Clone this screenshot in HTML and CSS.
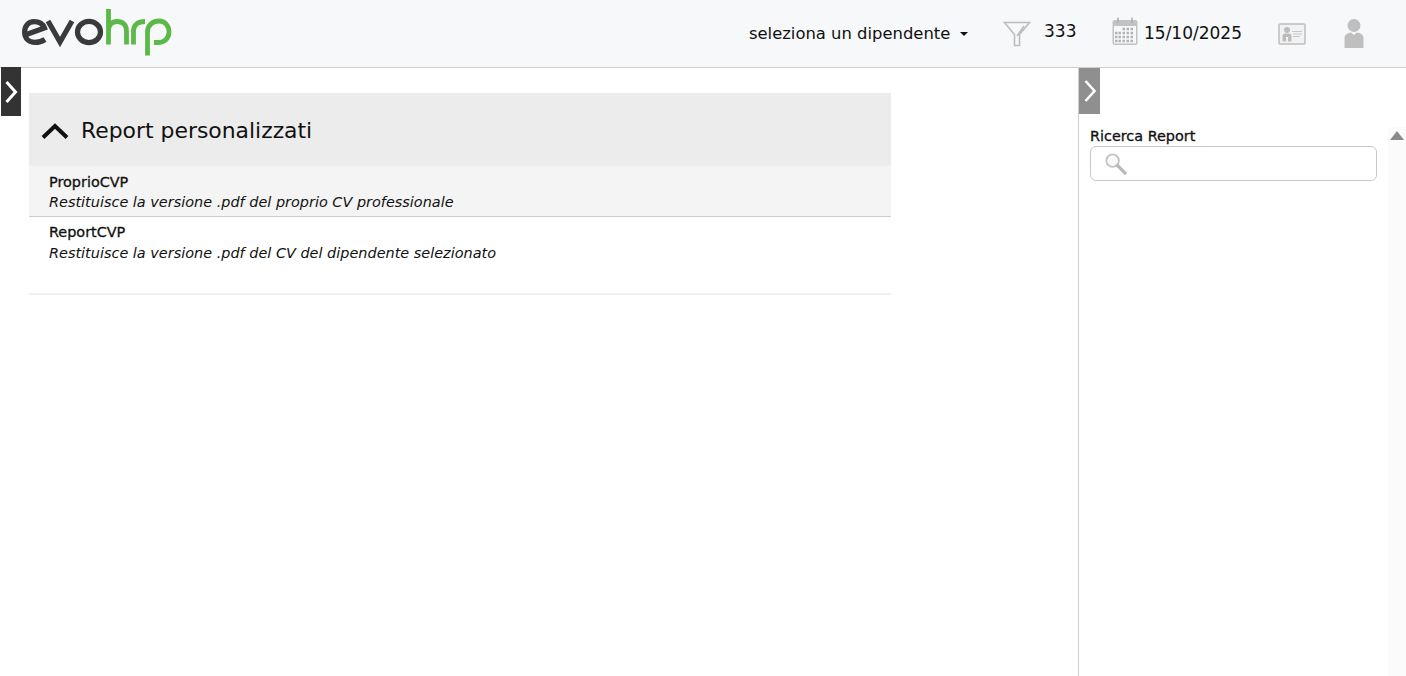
FILE: index.html
```html
<!DOCTYPE html>
<html lang="it">
<head>
<meta charset="utf-8">
<title>evohrp</title>
<link rel="stylesheet" href="styles.css">
</head>
<body>
<header class="topbar">
  <svg class="logo" viewBox="0 0 152 48" width="152" height="48" role="img" aria-label="evohrp">
    <g fill="none" stroke="#3a3a3a" stroke-width="5.200">
      <path d="M5 27 L24.500 20 C23 16 19 13.600 14 13.600 C8 13.600 4.600 18.500 4.600 24 C4.600 30.500 9 34.400 15 34.400 C19 34.400 22 33.500 25 31.500"/>
      <path d="M28 13 L40 34 L52 13"/>
      <ellipse cx="69" cy="24" rx="11.500" ry="10.600"/>
    </g>
    <g fill="none" stroke="#5cb947" stroke-width="4.800">
      <path d="M88.500 1 V36.500 M88.500 23 C88.500 16.500 92 13.500 97 13.500 C103 13.500 106.500 17 106.500 23 V36.500"/>
      <path d="M113.500 36.500 V23 C113.500 16.500 118 13.500 125 13.500"/>
      <path d="M127.500 47.500 V24 C127.500 17 133 13 139 13 C145 13 149 18 149 24 C149 30.500 144 34.500 138 34.500 H134"/>
    </g>
  </svg>
  <div class="tools">
    <div class="employee">seleziona un dipendente<span class="caret"></span></div>
    <svg class="icon-filter" viewBox="0 0 28 26" width="28" height="26" aria-hidden="true">
      <path d="M1.500 1.500 H26.500 L16.500 13.500 V24.500 H11.500 V13.500 Z M14 15 L21 5" fill="none" stroke="#bdbdbd" stroke-width="1.600"/>
    </svg>
    <span class="count">333</span>
    <svg class="icon-cal" viewBox="0 0 26 28" width="26" height="28" aria-hidden="true">
      <rect x="0.500" y="3" width="25" height="25" rx="2.500" fill="#c2c2c2"/>
      <rect x="2" y="9" width="22" height="17.500" fill="#f7f8fa"/>
      <path d="M6 0.500 V6 M20 0.500 V6" stroke="#b0b0b0" stroke-width="1.600"/>
      <path d="M10.500 12 H13 M14.500 12 H17 M18.500 12 H21 M3 16 H5.500 M6.500 16 H9 M10.500 16 H13 M14.500 16 H17 M18.500 16 H21 M3 20 H5.500 M6.500 20 H9 M10.500 20 H13 M14.500 20 H17 M18.500 20 H21 M3 24 H5.500 M6.500 24 H9 M10.500 24 H13 M14.500 24 H17 M18.500 24 H21" stroke="#b4b4b4" stroke-width="2.600"/>
    </svg>
    <span class="date">15/10/2025</span>
    <svg class="icon-card" viewBox="0 0 28 22" width="28" height="22" aria-hidden="true">
      <rect x="1" y="1" width="26" height="20" rx="1" fill="#f2f2f2" stroke="#bdbdbd" stroke-width="1.500"/>
      <circle cx="9" cy="7" r="3" fill="#bdbdbd"/>
      <path d="M4.500 18.500 V13 C4.500 11 6 10.500 9 10.500 C12 10.500 13.500 11 13.500 13 V18.500 H10 V14 H8 V18.500 Z" fill="#bdbdbd"/>
      <path d="M14 8.500 H24 M15 11 H24 M15 13.500 H22" stroke="#c8c8c8" stroke-width="1"/>
    </svg>
    <svg class="icon-user" viewBox="0 0 20 29" width="20" height="29" aria-hidden="true">
      <circle cx="10" cy="6.500" r="6.500" fill="#bfbfbf"/>
      <path d="M0.500 29 V19 C0.500 15.500 4 14 7 13.500 L10 16 L13 13.500 C16 14 19.500 15.500 19.500 19 V29 Z" fill="#bfbfbf"/>
    </svg>
  </div>
</header>
<div class="workspace">
  <div class="main">
    <button class="tab tab-dark" aria-label="Apri menu">
      <svg viewBox="0 0 14 24" width="14" height="24" aria-hidden="true"><path d="M2.500 2 L11.500 12 L2.500 22" fill="none" stroke="#fff" stroke-width="3"/></svg>
    </button>
    <section class="reports">
      <h1 class="group-head">
        <svg viewBox="0 0 28 16" width="28" height="16" aria-hidden="true"><path d="M2 14.500 L14 3 L26 14.500" fill="none" stroke="#111" stroke-width="4"/></svg>
        Report personalizzati
      </h1>
      <article class="report report-active">
        <h2 class="report-name">ProprioCVP</h2>
        <p class="report-desc">Restituisce la versione .pdf del proprio CV professionale</p>
      </article>
      <article class="report report-last">
        <h2 class="report-name">ReportCVP</h2>
        <p class="report-desc">Restituisce la versione .pdf del CV del dipendente selezionato</p>
      </article>
    </section>
  </div>
  <aside class="side">
    <button class="tab tab-grey" aria-label="Chiudi pannello">
      <svg viewBox="0 0 14 24" width="14" height="24" aria-hidden="true"><path d="M2.500 2 L11.500 12 L2.500 22" fill="none" stroke="#fff" stroke-width="2.600"/></svg>
    </button>
    <div class="side-body">
      <div class="search-col">
        <label class="search-label" for="q">Ricerca Report</label>
        <div class="search-box">
          <svg viewBox="0 0 24 24" width="23" height="23" aria-hidden="true">
            <circle cx="9" cy="9" r="6.500" fill="#fafafa" stroke="#c4c4c4" stroke-width="2"/>
            <path d="M14 14 L22 22" stroke="#b8b8b8" stroke-width="3.400" stroke-linecap="round"/>
          </svg>
          <input id="q" class="search-input" type="text">
        </div>
      </div>
      <div class="scrollbar"><span class="scroll-up"></span></div>
    </div>
  </aside>
</div>
</body>
</html>
```
FILE: styles.css
```css
* { box-sizing: border-box; }
html, body { height: 100%; }
body {
  margin: 0;
  overflow: hidden;
  background: #fff;
  color: #111;
  font-family: "DejaVu Sans", Verdana, sans-serif;
  display: flex;
  flex-direction: column;
}
.topbar {
  flex: 0 0 68px;
  display: flex;
  align-items: flex-start;
  justify-content: space-between;
  background: #f7f8fa;
  border-bottom: 1px solid #cfcfcf;
}
.logo { margin: 8px 0 0 20px; }
.tools { display: flex; align-items: center; height: 67px; font-size: 17px; }
.employee { width: 254px; font-size: 16.400px; display: flex; align-items: center; }
.caret {
  margin-left: 10px;
  border-left: 4px solid transparent;
  border-right: 4px solid transparent;
  border-top: 4px solid #111;
}
.icon-filter { margin-right: 13px; }
.count { width: 68px; margin-top: -6px; }
.icon-cal { margin-top: -6px; margin-right: 6px; }
.date { width: 134px; margin-top: -2px; }
.icon-card { margin-right: 38px; }
.icon-user { margin-right: 42px; }
.workspace { flex: 1; display: flex; min-height: 0; }
.main { width: 1078px; display: flex; align-items: flex-start; }
.tab {
  border: 0;
  padding: 0;
  display: flex;
  align-items: center;
  justify-content: center;
  width: 21px;
}
.tab-dark { width: 20px; height: 49px; background: #333; margin: -1px 8px 0 1px; flex: none; }
.tab-grey { height: 46px; background: #8f8f8f; }
.reports { width: 862px; margin-top: 25px; }
.group-head {
  margin: 0;
  height: 73px;
  background: #ececec;
  padding: 2px 0 0 12px;
  display: flex;
  align-items: center;
  gap: 12px;
  font-size: 21.900px;
  font-weight: 400;
}
.report { padding: 7px 20px 0; }
.report-active { background: #f4f4f4; height: 51px; border-bottom: 1px solid #ccc; padding-top: 8px; }
.report-last { height: 78px; border-bottom: 2px solid #f0f0f0; }
.report-name { margin: 0; font-size: 14.400px; font-weight: 400; line-height: 17px; -webkit-text-stroke: 0.3px #111; }
.report-desc { margin: 4px 0 0; font-size: 14.450px; font-style: italic; line-height: 17px; }
.report-active .report-desc { margin-top: 3px; }
.side { flex: 1; border-left: 1px solid #cfcfcf; min-width: 0; }
.side-body { display: flex; margin-top: 13px; padding-left: 11px; height: calc(100% - 59px); }
.search-col { width: 287px; }
.search-label { display: block; font-size: 14.400px; line-height: 17px; margin: 1px 0 1px; -webkit-text-stroke: 0.3px #111; }
.search-box {
  height: 35px;
  border: 1px solid #c8c8c8;
  border-radius: 6px;
  background: #fff;
  display: flex;
  align-items: center;
  padding-left: 13px;
}
.search-input { flex: 1; min-width: 0; border: 0; background: transparent; outline: none; height: 100%; }
.scrollbar { width: 18px; margin-left: 11px; background: #fbfbfb; display: flex; justify-content: center; padding-top: 3px; }
.scroll-up {
  height: 0;
  border-left: 7px solid transparent;
  border-right: 7px solid transparent;
  border-bottom: 9px solid #8a8a8a;
  margin-top: 1px;
}
```
